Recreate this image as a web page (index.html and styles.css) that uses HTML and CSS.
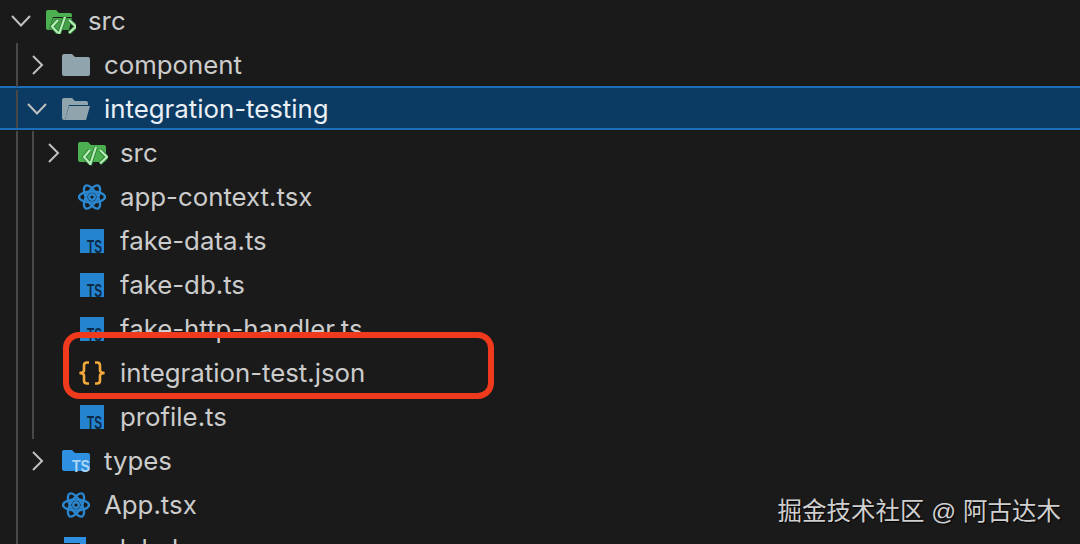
FILE: index.html
```html
<!DOCTYPE html>
<html lang="zh">
<head>
    <meta charset="UTF-8">
    <meta name="viewport" content="width=device-width, initial-scale=1.0">
    <title>src</title>
    <link rel="stylesheet" href="styles.css">
</head>
<body>

<svg class="defs" width="0" height="0">
    <defs>
        <symbol id="chevronDown" viewBox="0 0 26 20">
            <path d="M4 5l9 9.500L22 5" fill="none" stroke="currentColor" stroke-width="2"/>
        </symbol>
        <symbol id="chevronRight" viewBox="0 0 26 20">
            <path d="M9 1l9 9-9 9" fill="none" stroke="currentColor" stroke-width="2"/>
        </symbol>
        <symbol id="folderSrc" viewBox="0 0 30 26">
            <path d="M0 4A2 2 0 0 1 2 2h8l3 3h13a2 2 0 0 1 2 2v13a2 2 0 0 1-2 2H2a2 2 0 0 1-2-2z" fill="#4caf50"/>
            <path d="M12 10l-6 7 6 6.500M22 10l7 7-7 6.500M18 7l-6 18" fill="none" stroke="#2f7d34" stroke-width="4"/>
            <path d="M12 10l-6 7 6 6.500M22 10l7 7-7 6.500M18 7l-6 18" fill="none" stroke="#b4f0b8" stroke-width="2.200"/>
        </symbol>
        <symbol id="folderSrcOpen" viewBox="0 0 30 26">
            <path d="M0 4A2 2 0 0 1 2 2h8l3 3h11a2 2 0 0 1 2 2v2H7l-4 13H2a2 2 0 0 1-2-2z" fill="#4caf50"/>
            <path d="M7 10h19l-3 12H3z" fill="#45a049"/>
            <path d="M12 12l-6 6.500 6 6.500M23 12l7 6.500-7 6.500M19 9l-6 17" fill="none" stroke="#2f7d34" stroke-width="4"/>
            <path d="M12 12l-6 6.500 6 6.500M23 12l7 6.500-7 6.500M19 9l-6 17" fill="none" stroke="#b4f0b8" stroke-width="2.200"/>
        </symbol>
        <symbol id="folder" viewBox="0 0 30 26">
            <path d="M0 4A2 2 0 0 1 2 2h8l3 3h13a2 2 0 0 1 2 2v15a2 2 0 0 1-2 2H2a2 2 0 0 1-2-2z" fill="#90a4ae"/>
        </symbol>
        <symbol id="folderOpen" viewBox="0 0 30 26">
            <path d="M0 4A2 2 0 0 1 2 2h8l3 3h11a2 2 0 0 1 2 2v2H7l-4 15H2a2 2 0 0 1-2-2z" fill="#90a4ae"/>
            <path d="M7 10h21l-4 14H3z" fill="#90a4ae"/>
        </symbol>
        <symbol id="folderTs" viewBox="0 0 30 26">
            <path d="M0 4A2 2 0 0 1 2 2h8l3 3h13a2 2 0 0 1 2 2v14a2 2 0 0 1-2 2H2a2 2 0 0 1-2-2z" fill="#2f8fe0"/>
            <text x="10" y="24" textLength="18" lengthAdjust="spacingAndGlyphs" class="icon-text folder-ts">TS</text>
        </symbol>
        <symbol id="react" viewBox="0 0 28 28">
            <g fill="none" stroke="#2a86cf" stroke-width="2.400">
                <ellipse cx="14" cy="14" rx="13" ry="5.500"/>
                <ellipse cx="14" cy="14" rx="13" ry="5.500" transform="rotate(60 14 14)"/>
                <ellipse cx="14" cy="14" rx="13" ry="5.500" transform="rotate(120 14 14)"/>
                <circle cx="14" cy="14" r="2.800"/>
            </g>
        </symbol>
        <symbol id="tsFile" viewBox="0 0 24 24">
            <rect width="24" height="24" fill="#2484d0"/>
            <text x="7" y="23.500" textLength="15" lengthAdjust="spacingAndGlyphs" class="icon-text file-ts">TS</text>
        </symbol>
        <symbol id="json" viewBox="0 0 28 24">
            <path d="M11 1.500H9Q6 1.500 6 4.500v5Q6 11.500 1.500 12 6 12.500 6 14.500v5q0 3 3 3h2M17 1.500h2q3 0 3 3v5q0 2 4.500 2.500-4.500 .5-4.500 2.500v5q0 3-3 3h-2" fill="none" stroke="#f0a93a" stroke-width="2.600"/>
        </symbol>
        <symbol id="configFile" viewBox="0 0 24 24">
            <path d="M0 0h22v24h-6V6H0z" fill="#2f8fe0"/>
        </symbol>
    </defs>
</svg>

<div class="tree">
    <div class="row">
        <svg class="twistie"><use href="#chevronDown"/></svg>
        <svg class="icon folder-icon"><use href="#folderSrcOpen"/></svg>
        <span class="name">src</span>
    </div>
    <div class="row">
        <span class="guide"></span>
        <svg class="twistie"><use href="#chevronRight"/></svg>
        <svg class="icon folder-icon"><use href="#folder"/></svg>
        <span class="name">component</span>
    </div>
    <div class="row selected">
        <span class="guide"></span>
        <svg class="twistie"><use href="#chevronDown"/></svg>
        <svg class="icon folder-icon"><use href="#folderOpen"/></svg>
        <span class="name">integration-testing</span>
    </div>
    <div class="row">
        <span class="guide"></span><span class="guide"></span>
        <svg class="twistie"><use href="#chevronRight"/></svg>
        <svg class="icon folder-icon"><use href="#folderSrc"/></svg>
        <span class="name">src</span>
    </div>
    <div class="row">
        <span class="guide"></span><span class="guide"></span>
        <span class="twistie"></span>
        <svg class="icon react-icon"><use href="#react"/></svg>
        <span class="name">app-context.tsx</span>
    </div>
    <div class="row">
        <span class="guide"></span><span class="guide"></span>
        <span class="twistie"></span>
        <svg class="icon ts-icon"><use href="#tsFile"/></svg>
        <span class="name">fake-data.ts</span>
    </div>
    <div class="row">
        <span class="guide"></span><span class="guide"></span>
        <span class="twistie"></span>
        <svg class="icon ts-icon"><use href="#tsFile"/></svg>
        <span class="name">fake-db.ts</span>
    </div>
    <div class="row">
        <span class="guide"></span><span class="guide"></span>
        <span class="twistie"></span>
        <svg class="icon ts-icon"><use href="#tsFile"/></svg>
        <span class="name">fake-http-handler.ts</span>
    </div>
    <div class="row">
        <span class="guide"></span><span class="guide"></span>
        <span class="twistie"></span>
        <svg class="icon json-icon"><use href="#json"/></svg>
        <span class="name">integration-test.json</span>
    </div>
    <div class="row">
        <span class="guide"></span><span class="guide"></span>
        <span class="twistie"></span>
        <svg class="icon ts-icon"><use href="#tsFile"/></svg>
        <span class="name">profile.ts</span>
    </div>
    <div class="row">
        <span class="guide"></span>
        <svg class="twistie"><use href="#chevronRight"/></svg>
        <svg class="icon folder-icon"><use href="#folderTs"/></svg>
        <span class="name">types</span>
    </div>
    <div class="row">
        <span class="guide"></span>
        <span class="twistie"></span>
        <svg class="icon react-icon"><use href="#react"/></svg>
        <span class="name">App.tsx</span>
    </div>
    <div class="row">
        <span class="guide"></span>
        <span class="twistie"></span>
        <svg class="icon ts-icon"><use href="#configFile"/></svg>
        <span class="name">global.css</span>
    </div>
</div>

<div class="highlight"></div>
<div class="watermark">掘金技术社区 @ 阿古达木</div>

</body>
</html>
```

FILE: styles.css
```css
html, body {
    height: 100%;
}

body {
    margin: 0;
    overflow: hidden;
    position: relative;
    background-color: #1a1a1a;
    color: #cccccc;
    font-family: Inter, "Liberation Sans", sans-serif;
}

.defs {
    position: absolute;
}

.tree {
    margin-top: -1px;
}

.row {
    display: flex;
    align-items: center;
    box-sizing: border-box;
    height: 44px;
    padding-left: 16px;
}

.row.selected {
    margin-top: -1px;
    margin-bottom: 1px;
    padding-top: 2px;
    background-color: #0b3a63;
    border-top: 2px solid #1a6fb8;
    border-bottom: 2px solid #1a6fb8;
    color: #eaf0f5;
}

.guide {
    box-sizing: border-box;
    flex: none;
    width: 16px;
    height: 100%;
    border-left: 2px solid #484848;
}

.twistie {
    flex: none;
    width: 26px;
    height: 20px;
    margin-left: -8px;
    margin-right: 12px;
    color: #c0c0c0;
}

.icon {
    flex: none;
    margin-right: 14px;
}

.folder-icon {
    width: 30px;
    height: 26px;
    margin-right: 12px;
}

.react-icon {
    width: 28px;
    height: 28px;
}

.ts-icon {
    width: 24px;
    height: 24px;
    margin-left: 2px;
    margin-right: 16px;
}

.json-icon {
    width: 28px;
    height: 24px;
}

.name {
    margin-bottom: 2px;
    font-size: 25.8px;
    white-space: nowrap;
}

.icon-text {
    font-family: "Liberation Sans", sans-serif;
    font-weight: 700;
}

.file-ts {
    font-size: 18px;
    fill: #0d2a44;
}

.folder-ts {
    font-size: 17px;
    fill: #a9d6fa;
}

.highlight {
    position: absolute;
    left: 63px;
    top: 332px;
    width: 431px;
    height: 67px;
    box-sizing: border-box;
    border: 6px solid #f03a1e;
    border-radius: 16px;
}

.watermark {
    position: absolute;
    right: 19px;
    top: 497px;
    font-family: "Liberation Sans", "Noto Sans CJK SC", sans-serif;
    font-size: 24.5px;
    line-height: 30px;
    white-space: nowrap;
    color: #cfcfcf;
    text-shadow: 1px 1px 1px #000000;
}
```
